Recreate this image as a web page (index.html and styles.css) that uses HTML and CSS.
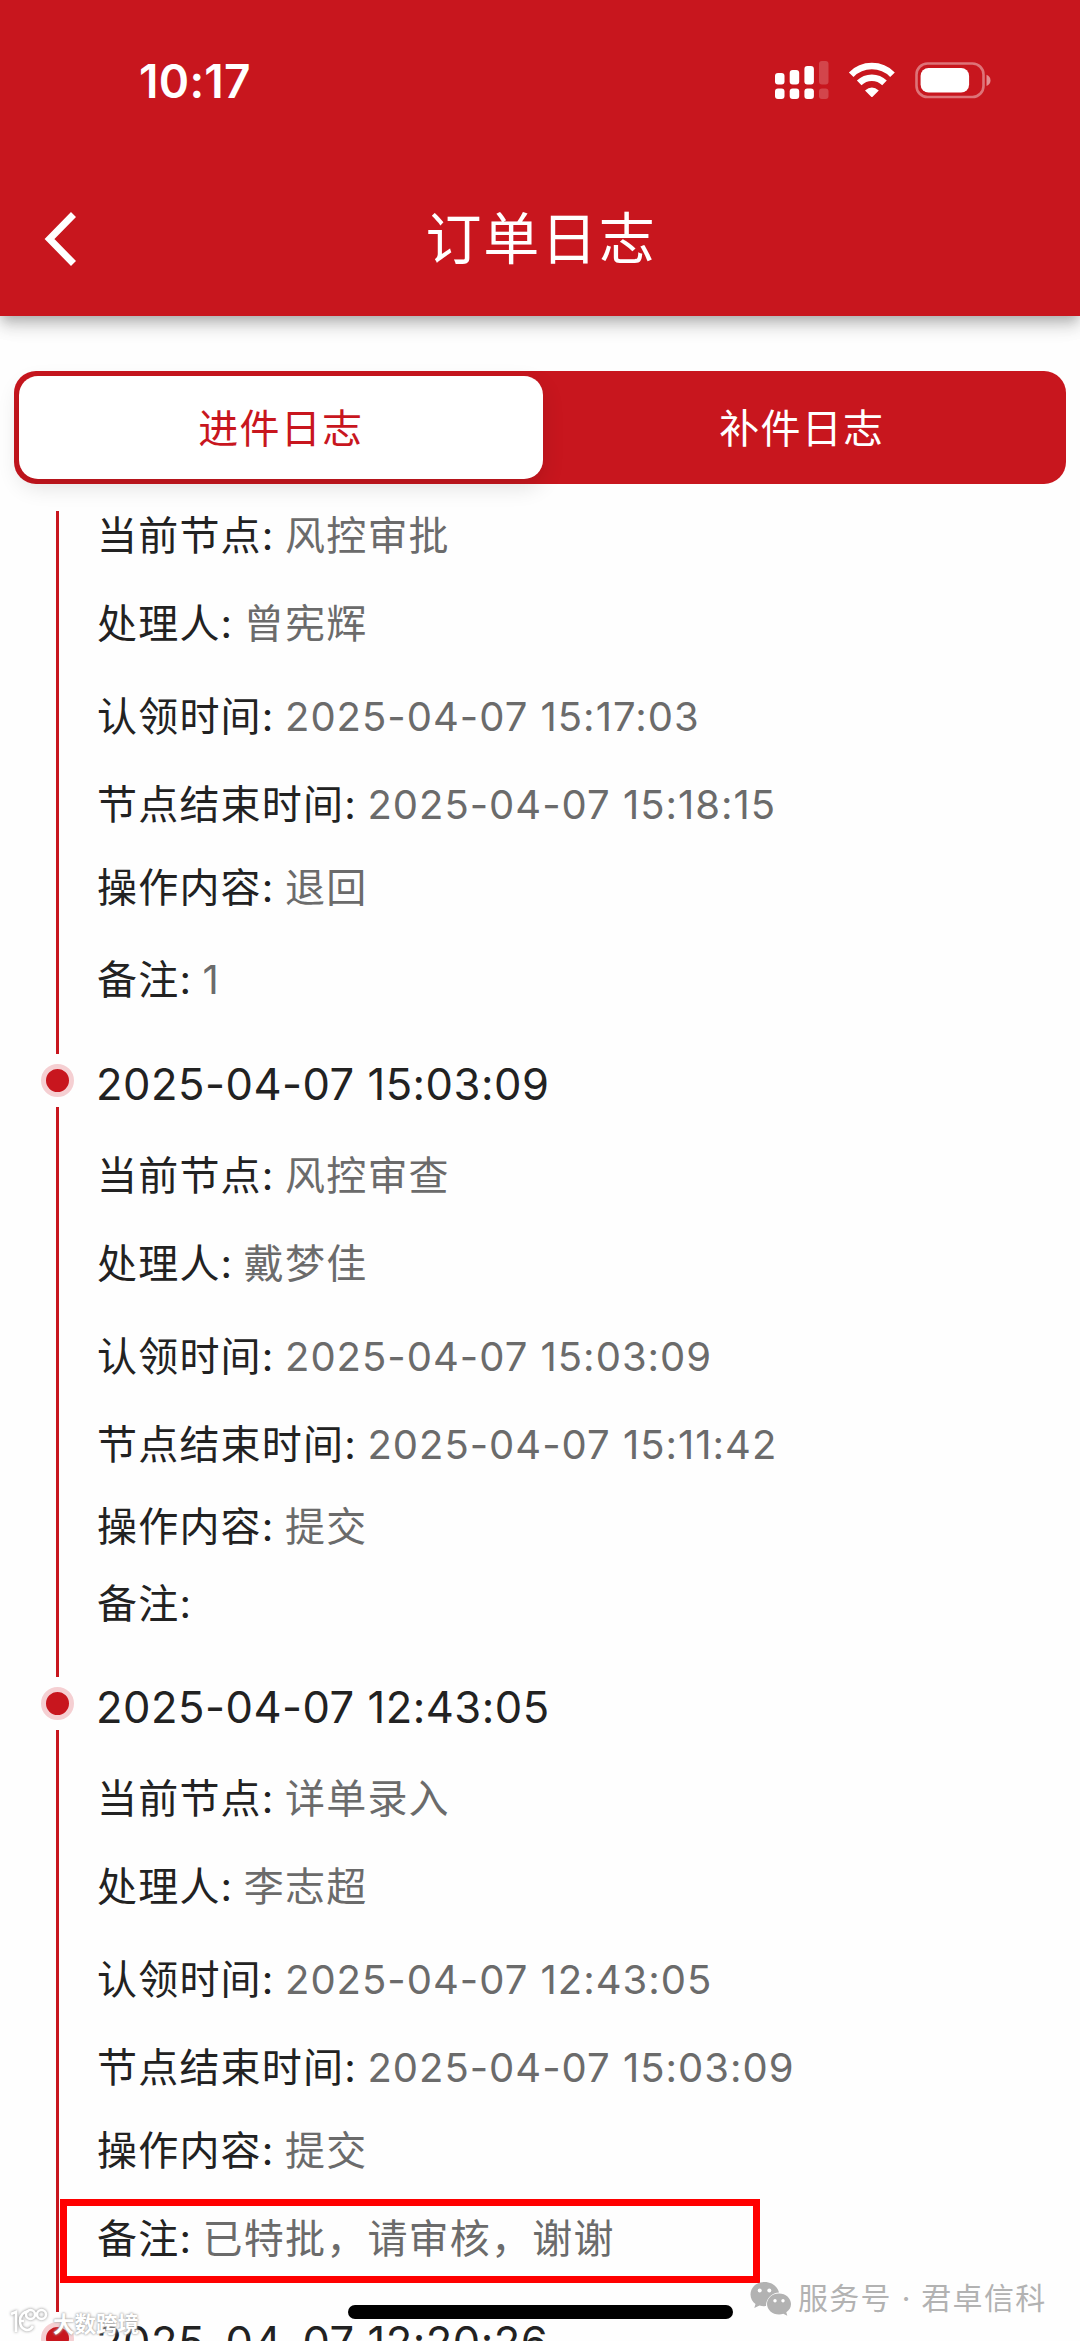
FILE: index.html
```html
<!DOCTYPE html>
<html lang="zh-CN">
<head>
<meta charset="utf-8">
<title>订单日志</title>
<link rel="stylesheet" href="styles.css">
</head>
<body>
<div class="screen">
  <header class="header">
    <div class="status">
      <span class="clock">10:17</span>
      <svg class="status-icons" width="220" height="44" viewBox="0 0 220 44" fill="#fff">
        <rect x="0" y="13" width="9.500" height="11.500" rx="3"/><rect x="0" y="28.500" width="9.500" height="10.500" rx="3"/>
        <rect x="14.700" y="10" width="9.500" height="14.500" rx="3"/><rect x="14.700" y="28.500" width="9.500" height="10.500" rx="3"/>
        <rect x="29.400" y="6" width="9.500" height="18.500" rx="3"/><rect x="29.400" y="28.500" width="9.500" height="10.500" rx="3"/>
        <g opacity=".2"><rect x="44" y="1" width="9.500" height="23.500" rx="3"/><rect x="44" y="28.500" width="9.500" height="10.500" rx="3"/></g>
        <g fill="none" stroke="#fff" stroke-width="6.500">
          <path d="M76.200 14.700a29 29 0 0 1 41.300 0"/>
          <path d="M84.200 22.900a18 18 0 0 1 25.300 0"/>
        </g>
        <path d="M90 30.500q6.900-6 13.800 0l-6.200 6.200q-.7.700-1.400 0z"/>
        <rect x="141.500" y="3.500" width="67" height="33.500" rx="11" fill="none" stroke="#fff" stroke-width="2.600" opacity=".4"/>
        <rect x="145.600" y="8" width="48.500" height="24.600" rx="8"/>
        <path d="M211.500 14.800q4 1.800 4 5.600t-4 5.600z" opacity=".5"/>
      </svg>
    </div>
    <div class="nav">
      <svg class="back" width="40" height="60" viewBox="0 0 40 60"><path d="M33.500 5.500L9.500 30l24 24.500" fill="none" stroke="#fff" stroke-width="7"/></svg>
      <h1 class="title">订单日志</h1>
    </div>
  </header>

  <nav class="tabs">
    <div class="tab tab-active">进件日志</div>
    <div class="tab">补件日志</div>
  </nav>

  <main class="timeline">
    <section class="entry entry-first">
      <div class="rail"><i class="line"></i></div>
      <div class="body">
        <p class="row node">当前节点: <span>风控审批</span></p>
        <p class="row handler">处理人: <span>曾宪辉</span></p>
        <p class="row claimed">认领时间: <span>2025-04-07 15:17:03</span></p>
        <p class="row ended">节点结束时间: <span>2025-04-07 15:18:15</span></p>
        <p class="row action">操作内容: <span>退回</span></p>
        <p class="row note note-number">备注: <span>1</span></p>
      </div>
    </section>
    <section class="entry">
      <div class="rail"><i class="dot"></i><i class="line"></i></div>
      <div class="body">
        <h2 class="date">2025-04-07 15:03:09</h2>
        <p class="row node">当前节点: <span>风控审查</span></p>
        <p class="row handler">处理人: <span>戴梦佳</span></p>
        <p class="row claimed">认领时间: <span>2025-04-07 15:03:09</span></p>
        <p class="row ended">节点结束时间: <span>2025-04-07 15:11:42</span></p>
        <p class="row action">操作内容: <span>提交</span></p>
        <p class="row note note-empty">备注:</p>
      </div>
    </section>
    <section class="entry">
      <div class="rail"><i class="dot"></i><i class="line"></i></div>
      <div class="body">
        <h2 class="date">2025-04-07 12:43:05</h2>
        <p class="row node">当前节点: <span>详单录入</span></p>
        <p class="row handler">处理人: <span>李志超</span></p>
        <p class="row claimed">认领时间: <span>2025-04-07 12:43:05</span></p>
        <p class="row ended">节点结束时间: <span>2025-04-07 15:03:09</span></p>
        <p class="row action">操作内容: <span>提交</span></p>
        <p class="row note">备注: <span>已特批，请审核，谢谢</span></p>
      </div>
    </section>
    <section class="entry">
      <div class="rail"><i class="dot"></i></div>
      <div class="body"><h2 class="date">2025-04-07 12:20:26</h2></div>
    </section>
  </main>

  <div class="highlight"></div>
  <div class="home-bar"></div>
  <div class="account">
    <svg width="42" height="35" viewBox="0 0 42 35">
      <path d="M14.500 1C6.500 1 .5 6.500.5 13.500c0 4 2 7.300 5 9.500L4.300 27l5.200-2.600c2 .6 4 .9 6.500.7 0-8 6.500-13.500 13-13.500C27.500 5 21.500 1 14.500 1z" fill="#b2b2b2"/>
      <path d="M29 12.500c-6.700 0-12 4.700-12 10.500s5.300 10.500 12 10.500c1.500 0 3-.2 4.300-.7l4 2-1-3.500C39.200 29.300 41 26.300 41 23c0-5.800-5.300-10.500-12-10.500z" fill="#b2b2b2"/>
      <g fill="#fff"><circle cx="9.700" cy="9.500" r="2"/><circle cx="19.300" cy="9.500" r="2"/><circle cx="25" cy="19.700" r="1.700"/><circle cx="33" cy="19.700" r="1.700"/></g>
    </svg>
    <span>服务号 · 君卓信科</span>
  </div>
  <div class="watermark">
    <svg width="40" height="28" viewBox="0 0 40 28" fill="none" stroke="#fff" stroke-width="2.600">
      <path d="M2 6l5-2v20M20 3c-6 1-9 5-9 10 0 9 9 12 13 5M11 13h4"/>
      <circle cx="21.500" cy="6.500" r="4.500"/><circle cx="32.500" cy="6.500" r="4.500"/>
    </svg>
    <span>大数跨境</span>
  </div>
</div>
</body>
</html>
```
FILE: styles.css
```css
* { box-sizing: border-box; margin: 0; padding: 0; }

body {
  background: #fefefe;
  font-family: Inter, "Noto Sans CJK SC", sans-serif;
  font-weight: 400;
  color: #222;
}

.screen {
  position: relative;
  width: 1080px;
  height: 2341px;
  overflow: hidden;
  display: flex;
  flex-direction: column;
}

.header {
  flex: none;
  height: 316px;
  background: #c8161e;
  color: #fff;
  box-shadow: 0 5px 11px -3px rgba(0, 0, 0, .2), 0 11px 14px rgba(0, 0, 0, .14), 0 3px 28px rgba(0, 0, 0, .08);
}

.status {
  height: 162px;
  padding: 0 85px 0 139px;
  display: flex;
  justify-content: space-between;
  align-items: center;
}
.clock { font-size: 46px; font-weight: 600; letter-spacing: .3px; }
.status-icons { flex: none; margin-top: 2px; }

.nav {
  height: 154px;
  padding: 0 40px;
  display: grid;
  grid-template-columns: 60px 1fr 60px;
  align-items: center;
}
.title {
  padding: 0 0 1px 2px;
  font-size: 56px;
  line-height: 80px;
  font-weight: 400;
  letter-spacing: 1.8px;
  text-align: center;
}

.tabs {
  flex: none;
  margin: 55px 14px 0;
  height: 113px;
  padding: 5px;
  display: flex;
  background: #c8161e;
  border-radius: 22px;
  color: #fff;
}
.tab {
  width: 518.500px;
  padding-bottom: 3px;
  display: flex;
  align-items: center;
  justify-content: center;
  font-size: 40px;
  letter-spacing: 1.200px;
}
.tab-active {
  width: 523.500px;
  background: #fff;
  color: #c8161e;
  border-radius: 19px;
  box-shadow: 0 8px 22px rgba(0, 0, 0, .12);
}

.timeline { margin-top: 27px; }

.entry { display: flex; }
.rail {
  width: 115px;
  margin-right: -18px;
  display: flex;
  flex-direction: column;
  align-items: center;
  flex: none;
}
.line { flex: 1; width: 3px; background: #c8161e; }
.dot {
  width: 33px;
  height: 33px;
  margin: 10px 0;
  border-radius: 50%;
  border: 5px solid #f5cfd2;
  background: #c8161e;
}
.body { flex: 1; padding-bottom: 43.500px; }

.date {
  margin-left: -1px;
  font-size: 43.500px;
  font-weight: 400;
  line-height: 60px;
  letter-spacing: .5px;
}
.row {
  font-size: 40px;
  line-height: 60px;
  letter-spacing: 1.200px;
  white-space: nowrap;
}
.row span {
  margin-left: -2px;
  color: #6b6b6b;
}
.claimed span, .ended span { letter-spacing: 1px; }
.node { margin-top: 32px; }
.entry-first .node { margin-top: -5px; }
.handler { margin-top: 28px; }
.claimed { margin-top: 33px; }
.ended { margin-top: 28px; }
.action { margin-top: 22.500px; }
.note { margin-top: 28px; }
.note-number { margin-top: 32.500px; }
.note-empty { margin-top: 16.500px; }

.highlight {
  position: absolute;
  left: 60px;
  top: 2199px;
  width: 700px;
  height: 84px;
  border: 7px solid #f00;
}
.home-bar {
  position: absolute;
  left: 348px;
  top: 2305px;
  width: 385px;
  height: 14px;
  border-radius: 7px;
  background: #000;
}
.account {
  position: absolute;
  left: 750px;
  top: 2276px;
  display: flex;
  align-items: center;
  gap: 6px;
  height: 44px;
  font-size: 30px;
  letter-spacing: 1.300px;
  color: #b2b2b2;
  white-space: nowrap;
}
.account span { margin-top: -4px; }
.watermark {
  position: absolute;
  left: 9px;
  top: 2306px;
  display: flex;
  align-items: center;
  gap: 4px;
  height: 32px;
  font-size: 21.500px;
  font-weight: 700;
  color: #fff;
  white-space: nowrap;
  text-shadow: 0 0 2px #999, 0 0 3px #bbb;
}
.watermark svg { filter: drop-shadow(0 0 1.500px #888); }
```
